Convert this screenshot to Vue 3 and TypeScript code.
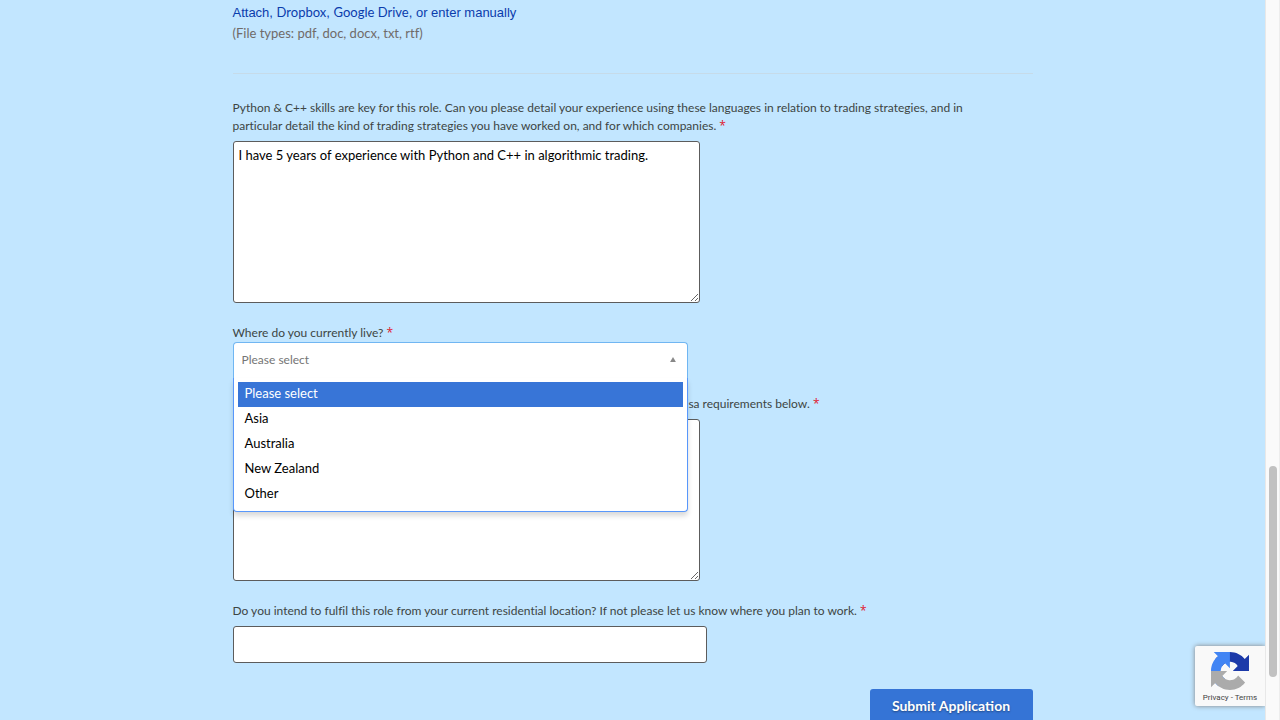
<script setup lang="ts">
import { ref } from 'vue'

const experience = ref('I have 5 years of experience with Python and C++ in algorithmic trading.')
const visa = ref('')
const workplace = ref('')
const regions: string[] = ['Please select', 'Asia', 'Australia', 'New Zealand', 'Other']
const region = ref('Please select')
</script>

<template>
  <div class="page">
    <main class="content">
      <form class="form" @submit.prevent>
        <section class="resume">
          <p class="sources">
            <a href="#attach">Attach</a>, <a class="cloud" href="#dropbox">Dropbox</a>,
            <a class="cloud" href="#drive">Google Drive</a>, <a href="#manual">or enter manually</a>
          </p>
          <p class="types">(File types: pdf, doc, docx, txt, rtf)</p>
        </section>

        <div class="field">
          <label for="experience">Python &amp; C++ skills are key for this role. Can you please detail your experience using these languages in relation to trading strategies, and in particular detail the kind of trading strategies you have worked on, and for which companies. <span class="required">*</span></label>
          <textarea id="experience" v-model="experience"></textarea>
        </div>

        <div class="field">
          <label for="region">Where do you currently live? <span class="required">*</span></label>
          <div class="picker">
            <select id="region" v-model="region">
              <option v-for="name in regions" :key="name">{{ name }}</option>
            </select>
            <svg class="arrow" viewBox="0 0 7 6" aria-hidden="true"><path d="M3.5 0L7 6H0z" fill="#888" /></svg>
            <ul class="menu" role="listbox">
              <li v-for="name in regions" :key="name" role="option" :aria-selected="name === region" :class="{ active: name === region }" @click="region = name">{{ name }}</li>
            </ul>
          </div>
        </div>

        <div class="field">
          <label class="visa" for="visa">visa requirements below. <span class="required">*</span></label>
          <textarea id="visa" v-model="visa"></textarea>
        </div>

        <div class="field">
          <label for="workplace">Do you intend to fulfil this role from your current residential location? If not please let us know where you plan to work. <span class="required">*</span></label>
          <input id="workplace" v-model="workplace" type="text" />
        </div>

        <button class="submit" type="submit">Submit Application</button>
      </form>

      <aside class="captcha">
        <svg viewBox="0 0 64 64" aria-hidden="true">
          <path fill="#1c3aa9" d="M64 31.955l-.033-1.37V4.687l-7.16 7.16C50.948 4.674 42.033.093 32.05.093c-10.4 0-19.622 4.96-25.458 12.64l11.736 11.86a15.55 15.55 0 0 1 4.754-5.334c2.05-1.6 4.952-2.906 8.968-2.906.485 0 .86.057 1.135.163 4.976.393 9.288 3.14 11.828 7.124l-8.307 8.307L64 31.953" />
          <path fill="#4285f4" d="M31.862.094l-1.37.033H4.594l7.16 7.16C4.58 13.147 0 22.06 0 32.046c0 10.4 4.96 19.622 12.64 25.458L24.5 45.768a15.55 15.55 0 0 1-5.334-4.754c-1.6-2.05-2.906-4.952-2.906-8.968 0-.485.057-.86.163-1.135.393-4.976 3.14-9.288 7.124-11.828l8.307 8.307L31.86.095" />
          <path fill="#ababab" d="M.001 32.045l.033 1.37v25.898l7.16-7.16c5.86 7.173 14.774 11.754 24.76 11.754 10.4 0 19.622-4.96 25.458-12.64l-11.736-11.86a15.55 15.55 0 0 1-4.754 5.334c-2.05 1.6-4.952 2.906-8.968 2.906-.485 0-.86-.057-1.135-.163-4.976-.393-9.288-3.14-11.828-7.124l8.307-8.307-37.297.092" />
        </svg>
        <p><a href="#privacy">Privacy</a> - <a href="#terms">Terms</a></p>
      </aside>
    </main>
    <div class="track"><div class="thumb"></div></div>
  </div>
</template>

<style>
body {
  background: #c2e6ff;
}
</style>

<style scoped>
* {
  box-sizing: border-box;
}
.page {
  display: flex;
  height: 100vh;
  overflow: hidden;
  font-family: Lato, "Noto Sans", sans-serif;
  font-size: 12px;
  font-variant-ligatures: none;
  line-height: 18px;
  color: #3d4543;
}
.content {
  position: relative;
  flex: 1;
  min-width: 0;
  overflow: hidden;
}
.form {
  display: flex;
  flex-direction: column;
  max-width: 800px;
  margin: 0 auto;
}
.resume {
  padding: 2px 0 30px;
  margin-bottom: 25px;
  border-bottom: 1px solid #c6dbe9;
  font-size: 13px;
  line-height: 20px;
}
p {
  margin: 0;
}
.sources,
.sources a {
  color: #0a3cac;
  font-family: "Liberation Sans", sans-serif;
  text-decoration: none;
}
.sources .cloud {
  font-family: Lato, sans-serif;
}
.types {
  color: #706b69;
}
.field {
  display: flex;
  flex-direction: column;
  align-items: flex-start;
  margin-bottom: 21px;
}
label {
  display: block;
  max-width: 770px;
}
.required {
  color: #e0182d;
  font-family: "Open Sans", sans-serif;
  line-height: 1;
}
textarea,
input {
  width: 467px;
  max-width: 100%;
  height: 162px;
  margin: 6px 0 0;
  padding: 3px 5px;
  border: 1px solid #5c5c5c;
  border-radius: 3px;
  background: #fff;
  color: #000;
  font-family: inherit;
  font-size: 13px;
  line-height: 20px;
}
input {
  width: 474px;
  height: 37px;
}
.picker {
  position: relative;
  width: 455px;
  max-width: 100%;
  height: 32px;
}
select {
  display: block;
  width: 100%;
  height: 36px;
  padding: 0 8px 2px;
  appearance: none;
  border: 1px solid #70b6f2;
  border-bottom: 0;
  border-radius: 4px 4px 0 0;
  background: #fff;
  color: #757575;
  font-family: inherit;
  font-size: 12px;
}
.arrow {
  position: absolute;
  top: 15px;
  right: 12px;
  width: 6px;
  height: 5px;
}
.menu {
  position: absolute;
  z-index: 1;
  top: 36px;
  left: 0;
  width: 100%;
  margin: 0;
  padding: 4px;
  border: 1px solid #5897fb;
  border-top: 0;
  border-radius: 0 0 4px 4px;
  background: #fff;
  box-shadow: 0 4px 5px rgba(0, 0, 0, 0.15);
  color: #000;
  font-size: 13px;
  line-height: 23px;
  list-style: none;
}
.menu li {
  padding: 0 7px 2px;
}
.menu .active {
  background: #3875d7;
  color: #fff;
}
.visa {
  width: 587px;
  text-align: right;
}
.submit {
  align-self: flex-end;
  width: 163px;
  height: 34px;
  margin-top: 5px;
  padding: 0 0 2px;
  border: 0;
  border-radius: 3px;
  background: #3574d6;
  color: #fff;
  font-family: inherit;
  font-size: 14px;
  font-weight: 700;
  text-shadow: 0 1px 2px rgba(0, 0, 0, 0.4);
}
.captcha {
  position: absolute;
  right: 0;
  bottom: 14px;
  width: 70px;
  height: 60px;
  padding-top: 6px;
  border-radius: 2px 0 0 2px;
  background: #f9f9f9;
  box-shadow: 0 0 5px gray;
  text-align: center;
}
.captcha svg {
  display: block;
  width: 38px;
  height: 38px;
  margin: 0 auto;
}
.captcha p,
.captcha a {
  color: #444;
  font-family: Roboto, sans-serif;
  font-size: 8px;
  line-height: 16px;
  text-decoration: none;
}
.track {
  width: 15px;
  padding-top: 466px;
  border-left: 1px solid #e8e8e8;
  border-right: 1px solid #ededed;
  background: #fafafa;
}
.thumb {
  width: 8px;
  height: 211px;
  margin: 0 auto;
  border-radius: 4px;
  background: #c1c1c1;
}
</style>
